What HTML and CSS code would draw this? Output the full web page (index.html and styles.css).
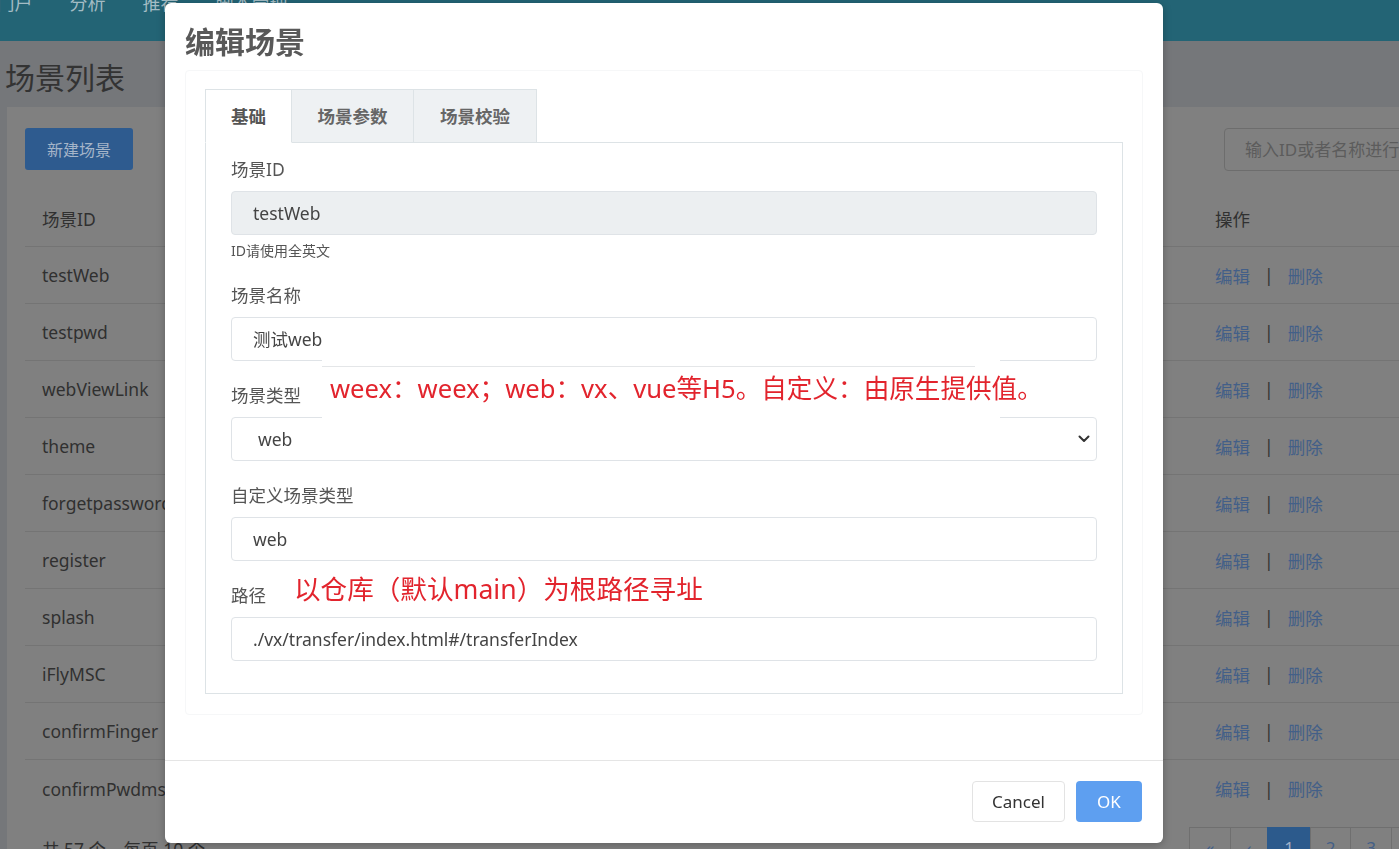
FILE: index.html
```html
<!DOCTYPE html>
<html lang="zh-CN">
<head>
<meta charset="utf-8">
<title>编辑场景</title>
<link rel="stylesheet" href="styles.css">
</head>
<body>
<div class="page">
  <nav class="navbar">
    <ul class="nav">
      <li>门户</li>
      <li>分析</li>
      <li>推荐</li>
      <li>脚本管理</li>
    </ul>
  </nav>
  <h1 class="page-title">场景列表</h1>
  <section class="card">
    <div class="toolbar">
      <button class="btn-new">新建场景</button>
      <div class="search">输入ID或者名称进行搜索</div>
    </div>
    <div class="table">
      <div class="row head"><div class="cell">场景ID</div><div class="cell">操作</div></div>
      <div class="row"><div class="cell">testWeb</div><div class="cell act"><span class="lk">编辑</span><span class="sep">|</span><span class="lk">删除</span></div></div>
      <div class="row"><div class="cell">testpwd</div><div class="cell act"><span class="lk">编辑</span><span class="sep">|</span><span class="lk">删除</span></div></div>
      <div class="row"><div class="cell">webViewLink</div><div class="cell act"><span class="lk">编辑</span><span class="sep">|</span><span class="lk">删除</span></div></div>
      <div class="row"><div class="cell">theme</div><div class="cell act"><span class="lk">编辑</span><span class="sep">|</span><span class="lk">删除</span></div></div>
      <div class="row"><div class="cell">forgetpassword</div><div class="cell act"><span class="lk">编辑</span><span class="sep">|</span><span class="lk">删除</span></div></div>
      <div class="row"><div class="cell">register</div><div class="cell act"><span class="lk">编辑</span><span class="sep">|</span><span class="lk">删除</span></div></div>
      <div class="row"><div class="cell">splash</div><div class="cell act"><span class="lk">编辑</span><span class="sep">|</span><span class="lk">删除</span></div></div>
      <div class="row"><div class="cell">iFlyMSC</div><div class="cell act"><span class="lk">编辑</span><span class="sep">|</span><span class="lk">删除</span></div></div>
      <div class="row"><div class="cell">confirmFinger</div><div class="cell act"><span class="lk">编辑</span><span class="sep">|</span><span class="lk">删除</span></div></div>
      <div class="row last"><div class="cell">confirmPwdmsg</div><div class="cell act"><span class="lk">编辑</span><span class="sep">|</span><span class="lk">删除</span></div></div>
    </div>
    <div class="table-foot">
      <div class="total">共 57 个，每页 10 个</div>
      <ul class="pager">
        <li class="w41">«</li>
        <li class="w37">‹</li>
        <li class="w43 active">1</li>
        <li class="w40">2</li>
        <li class="w41">3</li>
        <li class="w41">4</li>
        <li class="w41">5</li>
      </ul>
    </div>
  </section>
</div>

<div class="backdrop">
  <div class="modal">
    <div class="modal-head">
      <h2 class="modal-title">编辑场景</h2>
    </div>
    <div class="modal-body">
      <div class="inner-card">
        <div class="tabs">
          <div class="tab active t1">基础</div>
          <div class="tab t2">场景参数</div>
          <div class="tab t3">场景校验</div>
        </div>
        <div class="panel">
          <div class="group">
            <label class="label">场景ID</label>
            <div class="input disabled">testWeb</div>
            <div class="help">ID请使用全英文</div>
          </div>
          <div class="group">
            <label class="label">场景名称</label>
            <div class="input">测试web</div>
          </div>
          <div class="group">
            <label class="label">场景类型</label>
            <div class="input select"><span>web</span>
              <svg class="chev" width="12" height="8" viewBox="0 0 12 8"><path d="M1.5 1.5 6 6l4.5-4.5" fill="none" stroke="#333" stroke-width="2" stroke-linecap="round" stroke-linejoin="round"/></svg>
            </div>
          </div>
          <div class="group">
            <label class="label">自定义场景类型</label>
            <div class="input">web</div>
          </div>
          <div class="group">
            <label class="label">路径</label>
            <div class="input">./vx/transfer/index.html#/transferIndex</div>
          </div>
          <div class="note note-type">weex：weex；web：vx、vue等H5。自定义：由原生提供值。</div>
          <div class="note note-path">以仓库（默认main）为根路径寻址</div>
        </div>
      </div>
    </div>
    <div class="modal-foot">
      <button class="btn btn-cancel">Cancel</button>
      <button class="btn btn-ok">OK</button>
    </div>
  </div>
</div>
</body>
</html>
```

FILE: styles.css
```css
html, body {
  margin: 0;
  padding: 0;
  overflow: hidden;
  background: #75777a;
  font-family: "Noto Sans", "Noto Sans CJK SC", sans-serif;
}
ul { list-style: none; margin: 0; padding: 0; }
button { font-family: inherit; border: 0; cursor: pointer; }

.page {
  width: 1600px;
  height: 849px;
  overflow: hidden;
}

/* navbar */
.navbar {
  height: 41px;
  background: #236475;
  overflow: hidden;
}
.nav {
  display: flex;
  margin-left: -22px;
  margin-top: -6px;
}
.nav li {
  padding: 0 18.5px;
  font-size: 18px;
  line-height: 18px;
  color: #a3bcc4;
}

.page-title {
  margin: 17px 0 9px 5px;
  font-size: 30px;
  line-height: 40px;
  font-weight: normal;
  color: #333;
}

.card {
  margin-left: 7px;
  width: 1519px;
  padding: 21px 18px;
  background: #808080;
}
.toolbar {
  display: flex;
  justify-content: space-between;
  align-items: flex-start;
}
.btn-new {
  width: 108px;
  height: 42px;
  border-radius: 3px;
  background: #2e5b8f;
  color: #a5b5c9;
  font-size: 16px;
}
.search {
  width: 320px;
  height: 43px;
  box-sizing: border-box;
  border: 1px solid #6d6d6d;
  border-radius: 4px;
  padding-left: 20px;
  font-size: 17px;
  line-height: 41px;
  color: #5c5c5c;
  white-space: nowrap;
  overflow: hidden;
}

.table { margin-top: 19px; }
.row {
  display: grid;
  grid-template-columns: 1173px 1fr;
  height: 57px;
  box-sizing: border-box;
  border-bottom: 1px solid #747474;
  align-items: center;
}
.row.last { border-bottom: 0; }
.cell {
  padding-left: 17px;
  font-size: 17.5px;
  color: #303030;
  white-space: nowrap;
}
.act { display: flex; align-items: center; }
.lk { color: #435f88; }
.sep { color: #333; margin: 0 14px; }

.table-foot {
  display: grid;
  grid-template-columns: 1165px 1fr;
  align-items: center;
  margin-top: 10px;
}
.total {
  padding-left: 17px;
  font-size: 17.5px;
  color: #303030;
}
.pager { display: flex; }
.pager li {
  height: 42px;
  box-sizing: border-box;
  border: 1px solid #6f6f6f;
  margin-left: -1px;
  text-align: center;
  line-height: 40px;
  font-size: 17px;
  color: #435f88;
}
.pager li.active { background: #2c5a8c; border-color: #2c5a8c; color: #a0b0c8; }
.w37 { width: 38px; }
.w40 { width: 41px; }
.w41 { width: 42px; }
.w43 { width: 44px; }

/* modal */
.backdrop {
  position: fixed;
  inset: 0;
  padding: 3px 0 0 165px;
}
.modal {
  width: 998px;
  height: 840px;
  background: #fff;
  border-radius: 6px;
  display: flex;
  flex-direction: column;
  box-shadow: 0 2px 8px rgba(0,0,0,0.25);
}
.modal-head { padding: 19px 20px 0; }
.modal-title {
  margin: 0;
  font-size: 30px;
  line-height: 40px;
  font-weight: bold;
  color: #595959;
}
.modal-body { padding: 8px 20px 0; flex: 1; }
.inner-card {
  border: 1px solid #f6f7f8;
  border-radius: 4px;
  padding: 18px 19px 20px;
}
.tabs { display: flex; margin-bottom: -1px; position: relative; z-index: 1; }
.tab {
  height: 54px;
  box-sizing: border-box;
  border: 1px solid #dde3e6;
  border-left: 0;
  background: #eef1f3;
  font-size: 17.5px;
  font-weight: bold;
  color: #666;
  display: flex;
  align-items: center;
  justify-content: center;
  padding-bottom: 1px;
}
.tab.active {
  background: #fff;
  border-left: 1px solid #dde3e6;
  border-bottom-color: #fff;
  color: #555;
}
.t1 { width: 87px; }
.t2 { width: 122px; }
.t3 { width: 123px; }

.panel {
  position: relative;
  border: 1px solid #dde3e6;
  padding: 14px 25px 10px;
}
.group { margin-bottom: 22px; }
.label {
  display: block;
  font-size: 17.5px;
  line-height: 24px;
  color: #555;
  margin-bottom: 10px;
}
.input {
  height: 44px;
  box-sizing: border-box;
  border: 1px solid #dfe3e7;
  border-radius: 4px;
  padding: 0 21px;
  font-size: 17.5px;
  line-height: 42px;
  color: #444;
  white-space: nowrap;
}
.input.disabled { background: #eceff1; }
.input.select {
  display: flex;
  align-items: center;
  justify-content: space-between;
  padding: 0 6px 0 26px;
}
.chev { display: block; }
.help {
  margin-top: 6px;
  font-size: 14px;
  line-height: 20px;
  color: #555;
}

.note {
  position: absolute;
  color: #e2242d;
  white-space: nowrap;
}
.note-type {
  left: 116px;
  top: 214px;
  width: 678px;
  height: 61px;
  background: #fff;
  font-size: 25.6px;
  line-height: 26px;
  padding: 19px 0 0 8px;
  box-sizing: border-box;
}
.note-type::before {
  content: "";
  position: absolute;
  left: 0;
  top: 9px;
  width: 653px;
  height: 1px;
  background: #e4e6e8;
}
.note-path {
  left: 88px;
  top: 430px;
  font-size: 26.6px;
  line-height: 32px;
}

.modal-foot {
  border-top: 1px solid #e5e5e5;
  padding: 20px 21px 21px;
  display: flex;
  justify-content: flex-end;
  gap: 11px;
}
.btn {
  height: 41px;
  border-radius: 4px;
  font-size: 17px;
}
.btn-cancel {
  width: 93px;
  background: #fff;
  border: 1px solid #e3e3e3;
  color: #333;
}
.btn-ok {
  width: 66px;
  background: #5e9ff0;
  color: #fff;
}
```
